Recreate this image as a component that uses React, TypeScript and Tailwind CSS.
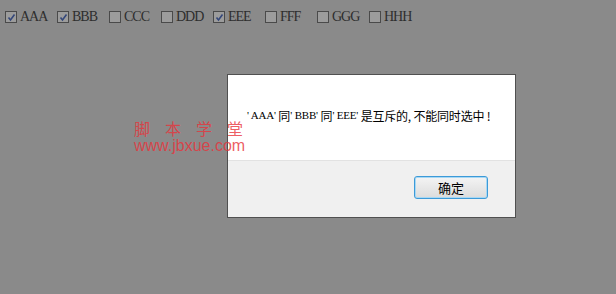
import * as React from 'react'

const items = [
  { label: 'AAA', checked: true },
  { label: 'BBB', checked: true },
  { label: 'CCC', checked: false },
  { label: 'DDD', checked: false },
  { label: 'EEE', checked: true },
  { label: 'FFF', checked: false },
  { label: 'GGG', checked: false },
  { label: 'HHH', checked: false },
]

function Box({ checked }: { checked: boolean }) {
  return (
    <span className="flex h-[12px] w-[12px] shrink-0 items-center justify-center border border-[#4a4a4a] bg-[#9c9c9c]">
      {checked && (
        <svg width="9" height="9" viewBox="0 0 9 9">
          <path d="M1.5 4.5 L3.5 7 L7.5 1.5" fill="none" stroke="#34477a" strokeWidth="1.6" />
        </svg>
      )}
    </span>
  )
}

export default function App() {
  return (
    <div className="relative h-[294px] w-[616px] overflow-hidden bg-[#8a8a8a] font-['Liberation_Serif','Noto_Sans_CJK_SC',serif]">
      {/* checkbox row */}
      <div className="flex pl-[5px] pt-[10px]">
        {items.map((it) => (
          <div key={it.label} className="flex w-[52px] items-center gap-[3px]">
            <Box checked={it.checked} />
            <span className="text-[14px] leading-[14px] tracking-[-1px] text-[#2e2e2e]">{it.label}</span>
          </div>
        ))}
      </div>

      {/* dialog */}
      <div className="absolute left-[227px] top-[74px] flex h-[144px] w-[289px] flex-col border border-[#505050] bg-white">
        <div className="flex flex-1 items-center whitespace-pre pb-[4px] pl-[19px] text-black">
          <span className="text-[11px] tracking-[-0.2px]">' AAA' </span>
          <span className="font-['Noto_Sans_CJK_SC',sans-serif] text-[12px]">同</span>
          <span className="text-[11px] tracking-[-0.2px]">' BBB' </span>
          <span className="font-['Noto_Sans_CJK_SC',sans-serif] text-[12px]">同</span>
          <span className="text-[11px] tracking-[-0.2px]">' EEE' </span>
          <span className="font-['Noto_Sans_CJK_SC',sans-serif] text-[12px] tracking-[-0.2px]">是互斥的, 不能同时选中 !</span>
        </div>
        <div className="flex h-[57px] justify-end border-t border-[#e2e2e2] bg-[#f0f0f0] pr-[27px] pt-[15px]">
          <button className="h-[23px] w-[74px] rounded-[3px] border border-[#3c9ad8] bg-gradient-to-b from-[#f4f4f4] to-[#dcdcdc] font-['Noto_Sans_CJK_SC',sans-serif] text-[13px] leading-none text-black shadow-[inset_0_0_0_1px_#a8d8f4]">
            确定
          </button>
        </div>
      </div>

      {/* watermark */}
      <div className="pointer-events-none absolute left-[134px] top-[118px] text-[#e8333a]/80">
        <div className="font-['Noto_Sans_CJK_SC',sans-serif] text-[16px] leading-[20px] tracking-[15px]">
          脚本学堂
        </div>
        <div className="font-['Liberation_Sans',Arial,sans-serif] text-[16px] leading-[15px]">
          www.jbxue.com
        </div>
      </div>
    </div>
  )
}
